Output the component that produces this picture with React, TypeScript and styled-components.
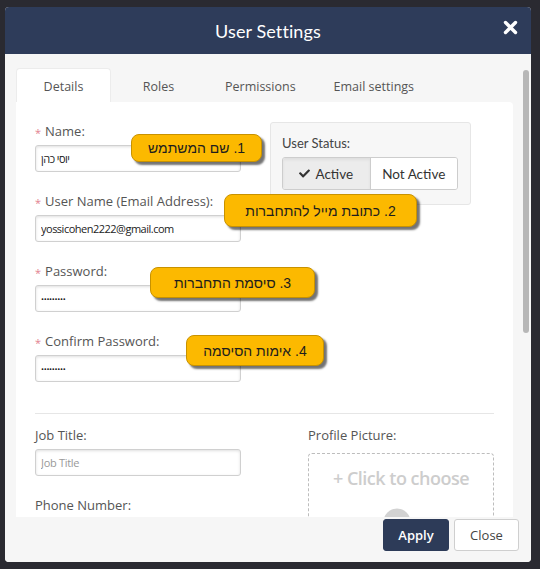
import styled, { createGlobalStyle } from 'styled-components';
import { FaCheck } from 'react-icons/fa';

const GlobalStyle = createGlobalStyle`
  html, body {
    margin: 0;
    padding: 0;
    background: #2a2a31;
    font-family: 'Open Sans', 'Liberation Sans', sans-serif;
  }
`;

const Modal = styled.div`
  margin: 7px 0 0 5px;
  width: 526px;
  height: 555px;
  display: flex;
  flex-direction: column;
  background: #f6f6f6;
  border-radius: 4px;
  overflow: hidden;
`;

const Header = styled.div`
  height: 47px;
  flex: none;
  display: grid;
  grid-template-columns: 1fr auto 1fr;
  align-items: center;
  background: #2e3c5a;
  color: #fff;
`;

const Title = styled.h1`
  grid-column: 2;
  margin: 0;
  font-family: Lato, 'Open Sans', sans-serif;
  font-size: 18px;
  font-weight: 400;
  letter-spacing: 0.1px;
`;

const CloseIcon = styled.button`
  grid-column: 3;
  justify-self: end;
  margin: 0 13px 6px 0;
  padding: 0;
  border: none;
  background: none;
  display: flex;
  cursor: pointer;
`;

const Body = styled.div`
  flex: 1;
  display: flex;
  align-items: flex-start;
  min-height: 0;
  padding: 14px 0 0 11px;
  overflow: hidden;
`;

const Main = styled.div`
  width: 497px;
  flex: none;
  display: flex;
  flex-direction: column;
`;

const Tabs = styled.div`
  display: flex;
  flex: none;
  height: 34px;
`;

const Tab = styled.div<{ $active?: boolean }>`
  min-width: 95px;
  padding: 2px 18px 0;
  box-sizing: border-box;
  display: flex;
  align-items: center;
  justify-content: center;
  font-size: 12.5px;
  color: #555;
  border-radius: 4px 4px 0 0;
  background: ${p => (p.$active ? '#fff' : 'transparent')};
  border: 1px solid ${p => (p.$active ? '#ececec' : 'transparent')};
  border-bottom: none;
`;

const Panel = styled.div`
  flex: none;
  background: #fff;
  border-radius: 0 4px 0 0;
  padding: 19px 19px 0 19px;
`;

const Top = styled.div`
  display: grid;
  grid-template-columns: 206px 201px;
  column-gap: 29px;
  align-items: start;
`;

const Field = styled.div`
  position: relative;
  margin-bottom: 19px;
`;

const Label = styled.label`
  display: flex;
  align-items: center;
  gap: 4px;
  height: 20px;
  margin-bottom: 4px;
  font-size: 13px;
  color: #555;
`;

const Required = styled.span`
  color: #e27f90;
  font-size: 11px;
  margin-top: 2px;
`;

const Input = styled.input<{ $secret?: boolean }>`
  display: block;
  width: 206px;
  height: 27px;
  box-sizing: border-box;
  padding: 0 5px;
  border: 1px solid #d0d0d0;
  border-radius: 3px;
  box-shadow: inset 0 1px 3px rgba(0, 0, 0, 0.13);
  font-family: 'Open Sans', 'Liberation Sans', sans-serif;
  font-size: ${p => (p.$secret ? '8px' : '11px')};
  letter-spacing: ${p => (p.$secret ? '-0.3px' : '-0.5px')};
  color: #222;
  outline: none;

  &::placeholder {
    color: #999;
    font-size: 11px;
    letter-spacing: -0.3px;
  }
`;

// yellow note pinned over a form field
const Callout = styled.div<{ $left: number; $top: number; $width: number; $height: number }>`
  position: absolute;
  left: ${p => p.$left}px;
  top: ${p => p.$top}px;
  width: ${p => p.$width}px;
  height: ${p => p.$height}px;
  box-sizing: border-box;
  z-index: 2;
  display: flex;
  align-items: center;
  justify-content: center;
  direction: rtl;
  white-space: nowrap;
  background: #fcb900;
  border: 1px solid #c89200;
  border-radius: 8px;
  box-shadow: 3px 3px 2px rgba(0, 0, 0, 0.55);
  font-family: 'Liberation Sans', Arial, sans-serif;
  font-size: 14px;
  color: #1d1d1d;
`;

const StatusBox = styled.div`
  margin-top: 1px;
  padding: 10px 12px 14px 11px;
  background: #f7f7f7;
  border: 1px solid #e6e6e6;
  border-radius: 3px;
  font-family: Lato, 'Open Sans', sans-serif;
`;

const StatusLabel = styled.div`
  font-size: 13px;
  color: #444;
  height: 20px;
  line-height: 20px;
  margin-bottom: 4px;
`;

const Toggle = styled.div`
  display: flex;
  height: 31px;
  border: 1px solid #cdcdcd;
  border-radius: 3px;
  overflow: hidden;
`;

const ToggleOption = styled.div<{ $on?: boolean }>`
  flex: 1;
  display: flex;
  align-items: center;
  justify-content: center;
  gap: 5px;
  font-size: 13.5px;
  color: #333;
  background: ${p => (p.$on ? '#ececec' : '#fff')};
  box-shadow: ${p => (p.$on ? 'inset 0 2px 3px rgba(0,0,0,0.06)' : 'none')};
  & + & {
    border-left: 1px solid #cdcdcd;
  }
`;

const Divider = styled.hr`
  margin: 12px 0 11px;
  border: none;
  border-top: 1px solid #e6e6e6;
`;

const Bottom = styled.div`
  display: grid;
  grid-template-columns: 206px 1fr;
  column-gap: 67px;
`;

const Dropzone = styled.div`
  margin-top: 8px;
  height: 110px;
  border: 1px dashed #bdbdbd;
  border-radius: 4px;
  display: flex;
  flex-direction: column;
  align-items: center;
  padding-top: 13px;
  box-sizing: border-box;
`;

const DropText = styled.div`
  font-size: 18px;
  font-weight: 600;
  line-height: 22px;
  color: #cdcdcd;
  letter-spacing: -0.5px;
`;

const Avatar = styled.svg`
  margin: 19px 0 0 10px;
`;

const ScrollTrack = styled.div`
  width: 6px;
  flex: none;
  margin: 2px 0 0 10px;
`;

const ScrollThumb = styled.div`
  height: 263px;
  border-radius: 3px;
  background: #b7b7b7;
`;

const Footer = styled.div`
  height: 45px;
  flex: none;
  display: flex;
  justify-content: flex-end;
  gap: 5px;
  padding: 2px 12px 0 0;
  box-sizing: border-box;
  background: #f6f6f6;
`;

const Button = styled.button<{ $primary?: boolean }>`
  height: 32px;
  width: ${p => (p.$primary ? '66px' : '65px')};
  border-radius: 3px;
  font-family: 'Open Sans', sans-serif;
  font-size: 13px;
  font-weight: ${p => (p.$primary ? 600 : 400)};
  color: ${p => (p.$primary ? '#fff' : '#444')};
  background: ${p => (p.$primary ? '#2d3b58' : '#fff')};
  border: 1px solid ${p => (p.$primary ? '#2d3b58' : '#cfcfcf')};
  cursor: pointer;
`;

const App = () => (
  <>
    <GlobalStyle />
    <Modal>
      <Header>
        <Title>User Settings</Title>
        <CloseIcon aria-label="close">
          <svg width="15" height="15" viewBox="0 0 15 15">
            <path d="M2.5 2.5 L12.5 12.5 M12.5 2.5 L2.5 12.5" stroke="#fff" strokeWidth="3.4" strokeLinecap="round" />
          </svg>
        </CloseIcon>
      </Header>

      <Body>
        <Main>
          <Tabs>
            <Tab $active>Details</Tab>
            <Tab>Roles</Tab>
            <Tab>Permissions</Tab>
            <Tab>Email settings</Tab>
          </Tabs>

          <Panel>
            <Top>
              <div>
                <Field>
                  <Label><Required>*</Required>Name:</Label>
                  <Input defaultValue="יוסי כהן" />
                  <Callout $left={96} $top={13} $width={131} $height={28}>1. שם המשתמש</Callout>
                </Field>
                <Field>
                  <Label><Required>*</Required>User Name (Email Address):</Label>
                  <Input defaultValue="yossicohen2222@gmail.com" />
                  <Callout $left={189} $top={3} $width={193} $height={33}>2. כתובת מייל להתחברות</Callout>
                </Field>
                <Field>
                  <Label><Required>*</Required>Password:</Label>
                  <Input $secret type="password" defaultValue="123456789" />
                  <Callout $left={115} $top={6} $width={165} $height={31}>3. סיסמת התחברות</Callout>
                </Field>
                <Field>
                  <Label><Required>*</Required>Confirm Password:</Label>
                  <Input $secret type="password" defaultValue="123456789" />
                  <Callout $left={151} $top={4} $width={138} $height={31}>4. אימות הסיסמה</Callout>
                </Field>
              </div>

              <StatusBox>
                <StatusLabel>User Status:</StatusLabel>
                <Toggle>
                  <ToggleOption $on>
                    <FaCheck size={11} />
                    Active
                  </ToggleOption>
                  <ToggleOption>Not Active</ToggleOption>
                </Toggle>
              </StatusBox>
            </Top>

            <Divider />

            <Bottom>
              <div>
                <Field>
                  <Label>Job Title:</Label>
                  <Input placeholder="Job Title" />
                </Field>
                <Field>
                  <Label>Phone Number:</Label>
                  <Input />
                </Field>
              </div>
              <div>
                <Label>Profile Picture:</Label>
                <Dropzone>
                  <DropText>+ Click to choose</DropText>
                  <Avatar width="46" height="30" viewBox="0 0 46 30">
                    <circle cx="14" cy="14" r="13.5" fill="#d2d2d2" />
                    <circle cx="36" cy="18" r="5" fill="#d2d2d2" />
                  </Avatar>
                </Dropzone>
              </div>
            </Bottom>
          </Panel>
        </Main>

        <ScrollTrack>
          <ScrollThumb />
        </ScrollTrack>
      </Body>

      <Footer>
        <Button $primary>Apply</Button>
        <Button>Close</Button>
      </Footer>
    </Modal>
  </>
);

export default App;
